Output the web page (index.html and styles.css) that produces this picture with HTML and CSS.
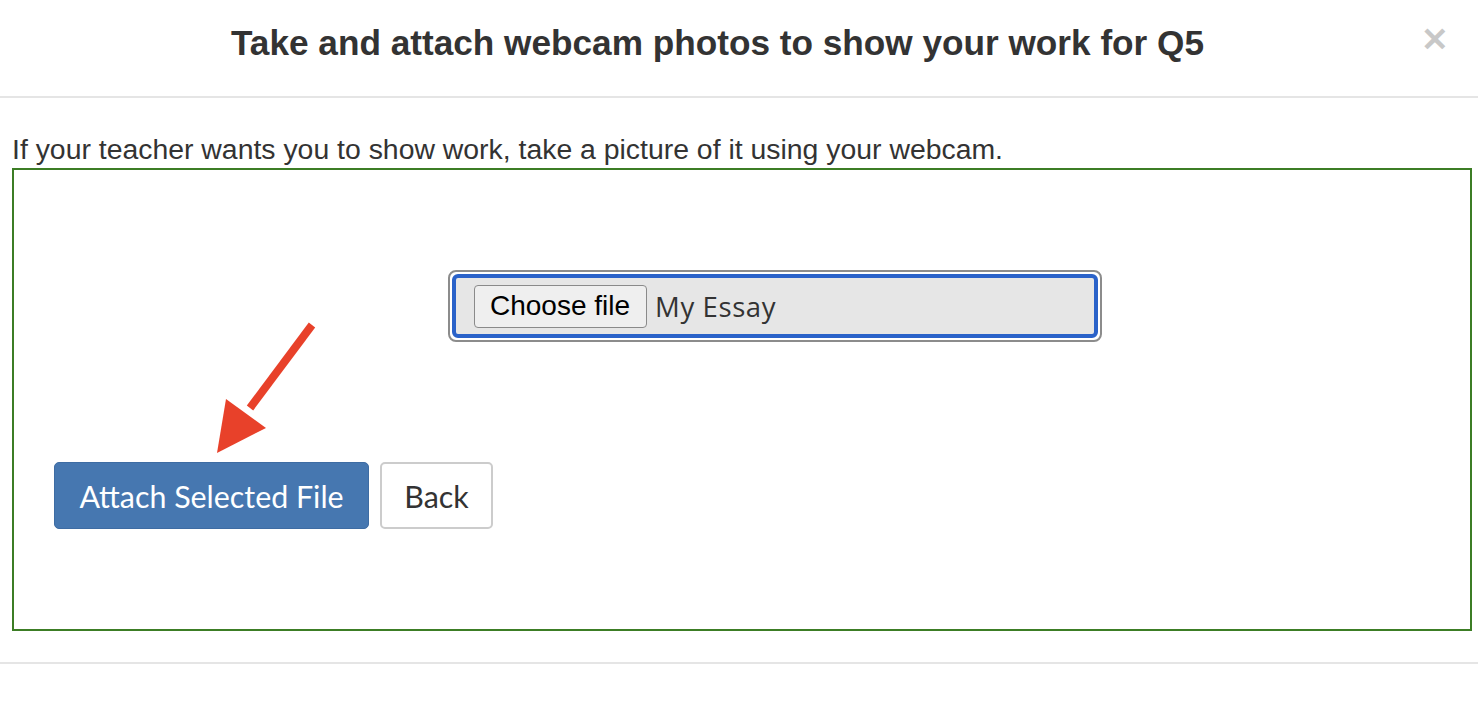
FILE: index.html
```html
<!DOCTYPE html>
<html lang="en">
<head>
<meta charset="utf-8">
<title>Webcam photos</title>
<link rel="stylesheet" href="styles.css">
</head>
<body>
<div class="modal">
  <header class="modal-header">
    <h1 class="modal-title">Take and attach webcam photos to show your work for Q5</h1>
    <span class="close">&#x2715;</span>
  </header>
  <section class="modal-body">
    <p class="intro">If your teacher wants you to show work, take a picture of it using your webcam.</p>
    <div class="capture-box">
      <div class="file-row">
        <div class="file-outer">
          <div class="file-field">
            <span class="choose-btn">Choose file</span>
            <span class="file-name">My Essay</span>
          </div>
        </div>
      </div>
      <div class="actions">
        <button class="btn btn-primary">Attach Selected File</button>
        <button class="btn btn-default">Back</button>
      </div>
      <svg class="arrow" width="120" height="150" viewBox="0 0 120 150">
        <line x1="108" y1="7" x2="46" y2="90" stroke="#e8412a" stroke-width="8" />
        <polygon points="13,135 22,81 62,110" fill="#e8412a" />
      </svg>
    </div>
  </section>
  <footer class="modal-footer"></footer>
</div>
</body>
</html>
```
FILE: styles.css
```css
html, body {
  margin: 0;
  padding: 0;
  background: #fff;
}
body {
  font-family: "Liberation Sans", Arial, sans-serif;
  color: #333;
}
.modal {
  width: 1478px;
}
.modal-header {
  position: relative;
  height: 96px;
  border-bottom: 2px solid #e5e5e5;
  display: flex;
  align-items: center;
  justify-content: center;
  padding-right: 43px;
  box-sizing: content-box;
}
.modal-title {
  margin: 0;
  font-size: 35.2px;
  font-weight: bold;
  color: #333;
  line-height: 40px;
  margin-bottom: 10px;
}
.close {
  position: absolute;
  right: 29px;
  top: 20px;
  font-size: 33px;
  font-weight: bold;
  color: #c8c8c8;
}
.modal-body {
  padding: 0 6px 0 12px;
}
.intro {
  margin: 0;
  padding-top: 32px;
  font-size: 28.4px;
  line-height: 38px;
}
.capture-box {
  position: relative;
  border: 2px solid #3c7d25;
  padding: 100px 40px;
}
.file-row {
  display: flex;
  padding-left: 394px;
}
.file-outer {
  border: 2px solid #8c8c8c;
  border-radius: 8px;
  padding: 2px;
  background: #fff;
}
.file-field {
  width: 646px;
  height: 64px;
  border: 4px solid #2a62c9;
  border-radius: 6px;
  background: #e6e6e6;
  display: flex;
  align-items: center;
  padding-left: 18px;
  box-sizing: border-box;
}
.choose-btn {
  font-family: "Liberation Sans", Arial, sans-serif;
  font-size: 28px;
  color: #000;
  background: #efefef;
  border: 1px solid #8a8a8a;
  border-radius: 4px;
  height: 43px;
  box-sizing: border-box;
  padding: 0 16px 0 15px;
  display: flex;
  align-items: center;
}
.file-name {
  margin-left: 8px;
  font-family: "Open Sans", sans-serif;
  font-size: 27.5px;
  color: #333;
  letter-spacing: 0.6px;
}
.actions {
  display: flex;
  gap: 11px;
  margin-top: 120px;
}
.btn {
  height: 67px;
  border-radius: 5px;
  font-family: "Lato", "Open Sans", sans-serif;
  font-size: 30.4px;
  padding: 0;
  cursor: pointer;
}
.btn-primary {
  width: 315px;
  background: #4677b0;
  border: 1px solid #3e6ca3;
  color: #fff;
}
.btn-default {
  width: 113px;
  background: #fff;
  border: 2px solid #cccccc;
  color: #333;
}
.arrow {
  position: absolute;
  left: 190px;
  top: 148px;
}
.modal-footer {
  margin-top: 31px;
  border-top: 2px solid #e5e5e5;
  height: 41px;
}
```
